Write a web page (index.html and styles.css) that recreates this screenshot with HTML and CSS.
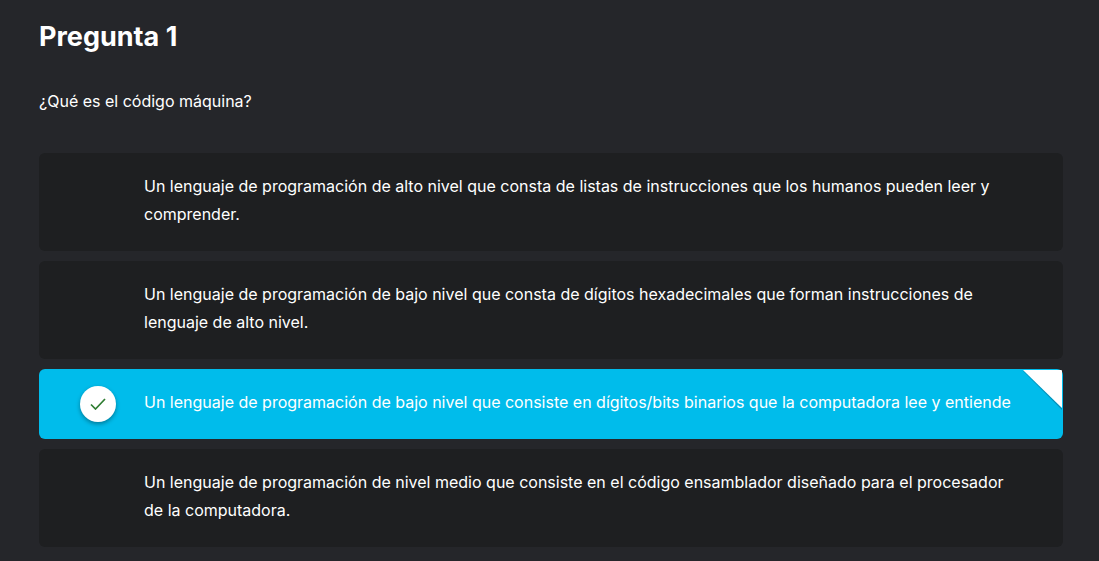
FILE: index.html
```html
<!DOCTYPE html>
<html lang="es">
<head>
<meta charset="utf-8">
<meta name="viewport" content="width=device-width, initial-scale=1">
<title>Pregunta 1</title>
<link rel="stylesheet" href="styles.css">
</head>
<body>
<main class="question">
  <h1 class="title">Pregunta 1</h1>
  <fieldset class="options">
    <legend class="prompt">¿Qué es el código máquina?</legend>
    <label class="option" for="o1">
      <input class="radio" type="radio" name="answer" id="o1">
      <span class="mark"></span>
      <span class="text">Un lenguaje de programación de alto nivel que consta de listas de instrucciones que los humanos pueden leer y comprender.</span>
    </label>
    <label class="option" for="o2">
      <input class="radio" type="radio" name="answer" id="o2">
      <span class="mark"></span>
      <span class="text">Un lenguaje de programación de bajo nivel que consta de dígitos hexadecimales que forman instrucciones de lenguaje de alto nivel.</span>
    </label>
    <label class="option selected" for="o3">
      <input class="radio" type="radio" name="answer" id="o3" checked>
      <span class="mark"><span class="badge"><svg width="16" height="12" viewBox="0 0 16 12" aria-hidden="true"><path d="M1 6.500 5.500 11 15 1" fill="none" stroke="#2f7d32" stroke-width="1.7"/></svg></span></span>
      <span class="text">Un lenguaje de programación de bajo nivel que consiste en dígitos/bits binarios que la computadora lee y entiende</span>
      <svg class="corner" width="40" height="42" viewBox="0 0 40 42" aria-hidden="true"><path d="M0 1 39 39V41L0 2Z" fill="#0590b8"/><path d="M0 1H38Q39 1 39 2V39Z" fill="#fff"/></svg>
    </label>
    <label class="option" for="o4">
      <input class="radio" type="radio" name="answer" id="o4">
      <span class="mark"></span>
      <span class="text">Un lenguaje de programación de nivel medio que consiste en el código ensamblador diseñado para el procesador de la computadora.</span>
    </label>
  </fieldset>
</main>
</body>
</html>
```
FILE: styles.css
```css
* { box-sizing: border-box; }
body {
  margin: 0;
  background: #25262a;
  color: #fff;
  font-family: Inter, "Liberation Sans", sans-serif;
  font-size: 16px;
  line-height: 28px;
}
.question { padding: 16px 36px 12px 39px; }
.title { margin: 0; font-size: 27px; line-height: 42px; font-weight: 700; }
.options {
  display: flex;
  flex-direction: column;
  gap: 10px;
  min-width: 0;
  margin: 29px 0 0;
  padding: 0;
  border: 0;
}
.prompt { padding: 0; margin-bottom: 38px; }
.option {
  position: relative;
  display: flex;
  align-items: center;
  padding: 19px 48px 23px 0;
  border-radius: 6px;
  background: #1e1f21;
  cursor: pointer;
}
.selected { background: #00bceb; }
.radio { position: absolute; opacity: 0; }
.option:focus-within:has(:focus-visible) { outline: 2px solid #fff; }
.mark { flex: 0 0 105px; padding-left: 41px; }
.badge {
  display: flex;
  align-items: center;
  justify-content: center;
  width: 36px;
  height: 36px;
  margin: -2px 0 -6px;
  border-radius: 50%;
  background: #fff;
  box-shadow: 0 2px 4px rgba(0, 0, 0, 0.35);
}
.text { flex: 1; }
.corner { position: absolute; top: 0; right: 0; }
```
